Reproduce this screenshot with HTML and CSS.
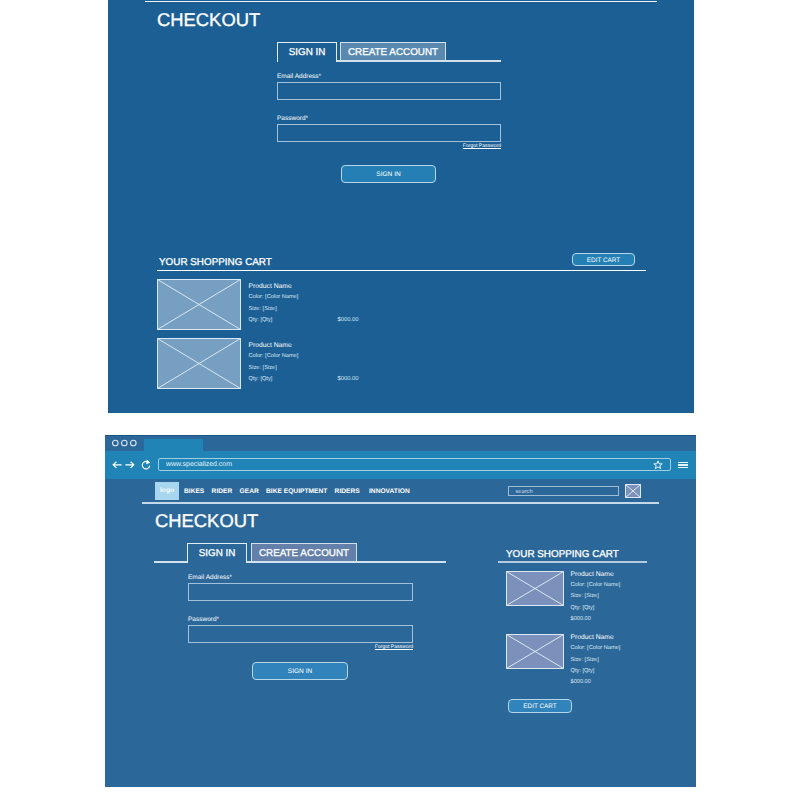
FILE: index.html
```html
<!DOCTYPE html>
<html lang="en">
<head>
<meta charset="utf-8">
<title>Checkout wireframes</title>
<link rel="stylesheet" href="styles.css">
</head>
<body>
<section class="panel tablet">
  <div class="rule"></div>
  <h1>CHECKOUT</h1>
  <form class="signin">
    <div class="tabs">
      <div class="tab active">SIGN IN</div>
      <div class="base gap"></div>
      <div class="tab other">CREATE ACCOUNT</div>
      <div class="base fill"></div>
    </div>
    <div class="fields">
      <label>Email Address*</label>
      <div class="input"></div>
      <label class="second">Password*</label>
      <div class="input"></div>
      <a class="forgot">Forgot Password</a>
    </div>
    <div class="btn">SIGN IN</div>
  </form>
  <div class="cart">
    <div class="cart-head"><h2>YOUR SHOPPING CART</h2><div class="btn edit">EDIT CART</div></div>
    <div class="item">
      <svg class="thumb" viewBox="0 0 84 51" preserveAspectRatio="none"><path d="M.5.5h83v50H.5zM.5.5l83 50M83.5.5l-83 50"/></svg>
      <div class="info"><b>Product Name</b><p>Color: [Color Name]</p><p>Size: [Size]</p><div class="qty"><p>Qty: [Qty]</p><p>$000.00</p></div></div>
    </div>
    <div class="item">
      <svg class="thumb" viewBox="0 0 84 51" preserveAspectRatio="none"><path d="M.5.5h83v50H.5zM.5.5l83 50M83.5.5l-83 50"/></svg>
      <div class="info"><b>Product Name</b><p>Color: [Color Name]</p><p>Size: [Size]</p><div class="qty"><p>Qty: [Qty]</p><p>$000.00</p></div></div>
    </div>
  </div>
</section>

<section class="panel desktop">
  <div class="strip">
    <svg class="dots" viewBox="0 0 28 8"><circle cx="5.3" cy="4" r="2.8"/><circle cx="14.3" cy="4" r="2.8"/><circle cx="23.3" cy="4" r="2.8"/></svg>
    <div class="chrome-tab"></div>
  </div>
  <div class="toolbar">
    <svg class="arrows" viewBox="0 0 40 12">
      <path d="M9.6 5.8H1.2M4.4 2.7L1.2 5.8l3.2 3.1M13.4 5.8h8.4M18.6 2.7l3.2 3.1-3.2 3.1"/>
      <path class="reload" d="M35 2.6A3.7 3.7 0 1 0 37.7 6.6"/><path class="head" d="M34.2 5.2L34.8 .6 38.2 3.8z"/>
    </svg>
    <div class="url"><span>www.specialized.com</span>
      <svg class="star" viewBox="0 0 10 10"><path d="M5 .9l1.1 2.9h3.1L6.8 5.7l.9 3L5 6.9 2.3 8.7l.9-3L.8 3.8h3.1z"/></svg>
    </div>
    <div class="burger"><i></i><i></i><i></i></div>
  </div>
  <nav>
    <div class="logo">logo</div>
    <div class="links"><span>BIKES</span><span>RIDER</span><span>GEAR</span><span>BIKE EQUIPTMENT</span><span>RIDERS</span><span>INNOVATION</span></div>
    <div class="search">search</div>
    <svg class="mini" viewBox="0 0 16 14"><path d="M.5.5h15v13H.5zM.5.5l15 13M15.5.5l-15 13"/></svg>
  </nav>
  <div class="rule"></div>
  <h1>CHECKOUT</h1>
  <div class="columns">
    <form class="signin">
      <div class="tabs">
        <div class="base lead"></div>
        <div class="tab active">SIGN IN</div>
        <div class="base gap"></div>
        <div class="tab other">CREATE ACCOUNT</div>
        <div class="base fill"></div>
      </div>
      <div class="fields">
        <label>Email Address*</label>
        <div class="input"></div>
        <label class="second">Password*</label>
        <div class="input"></div>
        <a class="forgot">Forgot Password</a>
      </div>
      <div class="btn">SIGN IN</div>
    </form>
    <div class="cart">
      <div class="cart-head"><h2>YOUR SHOPPING CART</h2></div>
      <div class="item">
        <svg class="thumb" viewBox="0 0 58 35" preserveAspectRatio="none"><path d="M.5.5h57v34H.5zM.5.5l57 34M57.5.5l-57 34"/></svg>
        <div class="info"><b>Product Name</b><p>Color: [Color Name]</p><p>Size: [Size]</p><p>Qty: [Qty]</p><p>$000.00</p></div>
      </div>
      <div class="item">
        <svg class="thumb" viewBox="0 0 58 35" preserveAspectRatio="none"><path d="M.5.5h57v34H.5zM.5.5l57 34M57.5.5l-57 34"/></svg>
        <div class="info"><b>Product Name</b><p>Color: [Color Name]</p><p>Size: [Size]</p><p>Qty: [Qty]</p><p>$000.00</p></div>
      </div>
      <div class="btn edit">EDIT CART</div>
    </div>
  </div>
</section>
</body>
</html>
```
FILE: styles.css
```css
* { box-sizing: border-box; }
body {
  margin: 0;
  height: 800px;
  overflow: hidden;
  background: #fff;
  color: #fff;
  font-family: "Liberation Sans", Arial, sans-serif;
  text-rendering: geometricPrecision;
  display: flex;
  flex-direction: column;
}
h1, h2, p { margin: 0; font-weight: 400; }
svg { display: block; flex: none; }
.panel { display: flex; flex-direction: column; flex: none; --line: #a3c1d9; }
.tablet { width: 586px; height: 413px; margin-left: 108px; background: #1c5f95; --thumb: #769fc1; --tab: #5a89b0; --btn: #247fb5; }
.desktop { width: 591px; height: 352px; margin: 22px 0 0 105px; background: #2c6799; --thumb: #7b90ba; --tab: #647faa; --btn: #3184bb; }

.rule { width: 512px; height: 1px; background: #eef5fa; margin: 1px 0 0 37px; flex: none; }
h1 { font-size: 18.4px; line-height: 20px; margin: 8px 0 0 49px; -webkit-text-stroke: .35px #fff; }
h2 { font-size: 9.9px; line-height: 12px; -webkit-text-stroke: .3px #fff; white-space: nowrap; }

.signin { width: 224px; margin: 12px 0 0 169px; display: flex; flex-direction: column; }
.tabs { display: flex; height: 20px; }
.tab { border: 1px solid #e4eef6; font-size: 9.85px; line-height: 19px; text-align: center; white-space: nowrap; -webkit-text-stroke: .3px #fff; }
.active { width: 60px; border-bottom: 0; }
.other { width: 106px; background: var(--tab); border-width: 1px 1px 2px; border-color: #d2e1ed; }
.base { border-bottom: 2px solid #d2e1ed; }
.gap { width: 3px; }
.fill { flex: 1; }
.fields { display: flex; flex-direction: column; width: 224px; padding-top: 10px; }
label { font-size: 6.5px; line-height: 9px; margin-bottom: 1px; }
.second { margin-top: 14px; }
.input { height: 18px; border: 1px solid var(--line); }
.forgot { font-size: 5.05px; line-height: 7px; margin-top: 1px; align-self: flex-end; text-decoration: underline; text-decoration-thickness: .6px; text-underline-offset: .6px; }
.btn { width: 95px; height: 18px; border: 1px solid #b7d6e8; border-radius: 4px; background: var(--btn); font-size: 6.55px; line-height: 17px; text-align: center; white-space: nowrap; flex: none; }
.signin .btn { margin: 15px 0 0 64px; }
.edit { width: 63px; height: 13px; font-size: 6.4px; line-height: 13px; }

.cart { width: 489px; margin: 70px 0 0 49px; }
.cart-head { height: 18px; display: flex; justify-content: space-between; border-bottom: 1px solid #fff; padding: 0 11px 0 2px; }
.cart-head h2 { margin-top: 4px; }
.item { display: flex; height: 51px; margin-top: 8px; }
.thumb { width: 84px; height: 51px; background: var(--thumb); }
.thumb path, .mini path { fill: none; stroke: #dce8f3; stroke-width: 1; }
.info { margin: 2px 0 0 7.5px; font-size: 5.65px; line-height: 11.3px; white-space: nowrap; color: #dbe7f1; }
.info b { display: block; font-weight: 400; font-size: 6.75px; color: #fff; }
.info p { height: 11.3px; }
.qty { display: flex; }
.qty p:first-child { width: 89px; }
.qty p:last-child { font-size: 5.85px; }

.strip { height: 16px; display: flex; flex: none; border-top: 1px solid #1a5589; }
.dots { width: 28px; height: 8px; margin: 3px 6px 0 5px; }
.dots circle { fill: none; stroke: #d8e6f1; stroke-width: 1.1; }
.chrome-tab { width: 59px; height: 12px; margin-top: 3px; background: #2084b7; }
.toolbar { height: 27.5px; display: flex; align-items: center; flex: none; background: #2084b7; padding-left: 6.5px; }
.arrows { width: 40px; height: 12px; }
.arrows path { fill: none; stroke: #fff; stroke-width: 1.2; }
.arrows .head { fill: #fff; stroke: none; }
.url { width: 513px; height: 13px; margin-left: 6.5px; border: 1px solid #a0cee3; border-radius: 2px; display: flex; justify-content: space-between; align-items: center; font-size: 6.95px; line-height: 12px; padding: 0 7px; color: #e4f1f8; }
.url span { padding-top: 1px; }
.star { width: 10px; height: 10px; }
.star path { fill: none; stroke: #fff; stroke-width: .9; }
.burger { margin-left: 6.5px; width: 10px; display: flex; flex-direction: column; gap: 1px; }
.burger i { height: 1.5px; background: #e8f3f9; }

nav { height: 23.5px; display: flex; flex: none; padding: 3.5px 0 0 50px; }
.logo { width: 24px; height: 18px; background: #a9d6ef; color: #f4fcff; font-size: 6.7px; font-weight: 700; line-height: 18px; text-align: center; }
.links { width: 329px; padding-left: 5px; display: flex; gap: 7.3px; font-size: 6.65px; font-weight: 700; line-height: 19px; white-space: nowrap; }
.links span:last-child { margin-left: 2px; }
.search { width: 111px; height: 10px; margin-top: 4px; border: 1px solid #9ebcd4; padding-left: 6.5px; font-size: 5.7px; line-height: 10.5px; color: #cddde9; }
.mini { width: 16px; height: 14px; margin: 2px 0 0 6px; background: #7b90ba; }
.desktop .rule { width: 517px; height: 2px; background: #c5d9ea; margin-top: -.5px; }
.desktop h1 { margin: 7px 0 0 50px; }
.columns { display: flex; margin-top: 12px; }
.desktop .signin { width: 292px; margin: 0 0 0 49px; }
.lead { width: 33px; }
.desktop .active { width: 60px; }
.desktop .gap { width: 4px; }
.desktop .fields { width: 225px; margin-left: 34px; padding-top: 10.5px; }
.desktop .signin .btn { margin: 11px 0 0 98px; width: 96px; }
.desktop .cart { width: 149px; margin: 1px 0 0 52px; }
.desktop .cart-head { height: 19px; padding-left: 8px; border-bottom: 2px solid #b3cbde; }
.desktop .cart-head h2 { margin-top: 5px; }
.desktop .item { height: 63.3px; margin: 0; padding: 8px 0 0 8px; }
.desktop .thumb { width: 58px; height: 35px; }
.desktop .info { margin: -1.7px 0 0 6.5px; }
.desktop .edit { margin: 10.4px 0 0 10px; width: 64px; height: 14px; line-height: 13px; }
```
